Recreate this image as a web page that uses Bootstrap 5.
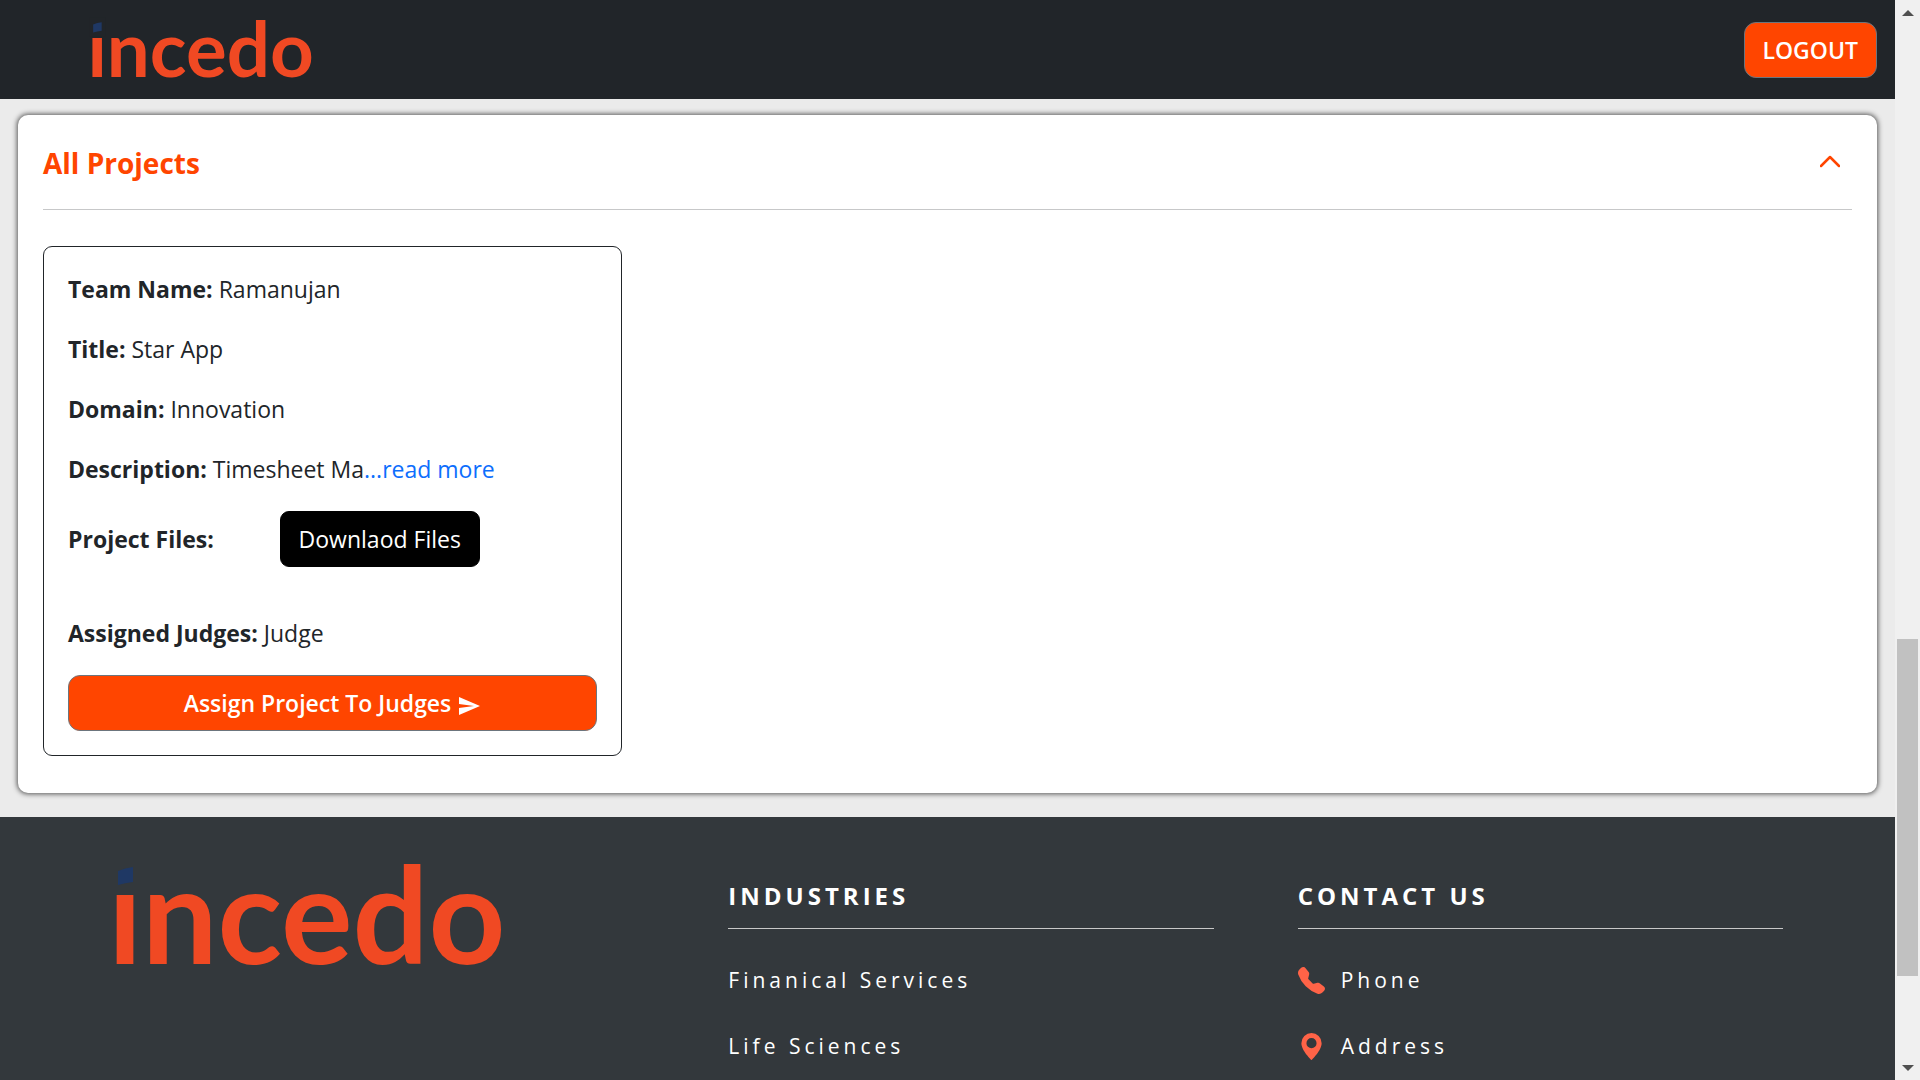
<!DOCTYPE html>
<html lang="en">
<head>
<meta charset="utf-8">
<meta name="viewport" content="width=device-width, initial-scale=1">
<title>Incedo - All Projects</title>
<link href="https://cdn.jsdelivr.net/npm/bootstrap@5.3.0/dist/css/bootstrap.min.css" rel="stylesheet">
<style>
  body { font-family: "Open Sans", "Noto Sans", sans-serif; font-size: 23px; line-height: 36px; background: #ebebeb; }
  .page-body { min-width: 0; }
  .top-bar { background: #212529; padding: 21px 18px 21px 92px; }
  .brand-mark { display: block; overflow: visible; fill: #f04923; font-family: Lato, sans-serif; font-weight: 700; font-size: 134px; }
  .brand-mark .tittle { fill: #1f3864; }
  .brand-top { width: 222px; height: 57px; }
  .brand-top .backdrop { fill: #212529; }
  .brand-foot { width: 390px; height: 100px; margin-left: -43px; }
  .brand-foot .backdrop { fill: #33383c; }
  .btn-big { --bs-btn-font-size: 23px; --bs-btn-line-height: 36px; --bs-btn-padding-y: 9px; --bs-btn-padding-x: 18px; }
  .btn-flame { --bs-btn-bg: #ff4500; --bs-btn-color: #fff; --bs-btn-border-color: #6c757d; --bs-btn-hover-bg: #e03d00; --bs-btn-hover-color: #fff; --bs-btn-border-radius: 12px; --bs-btn-font-weight: 600; }
  .btn-ink { --bs-btn-bg: #000; --bs-btn-color: #fff; --bs-btn-border-color: #000; --bs-btn-hover-bg: #222; --bs-btn-hover-color: #fff; --bs-btn-border-radius: 9px; }
  .panel { margin: 16px 18px 24px; padding: 24px 25px 37px; border-radius: 10px; box-shadow: 0 0 5px 1px #555; }
  .panel-head { height: 71px; margin-bottom: 36px; padding-right: 12px; border-bottom: 1px solid #c7c8c9; }
  .panel-title { font-size: 28px; line-height: 48px; color: #ff4500; }
  .fold { color: #ff4500; line-height: 0; }
  .project { border: 1px solid #212529; border-radius: 9px; }
  .project .card-body { padding: 24px; }
  .project p { margin-bottom: 24px; }
  .files-row { margin-bottom: 48px; }
  .files-label { flex: 0 0 40%; }
  .foot { background: #33383c; color: #fff; padding: 48px 112px 0 159px; }
  .foot .row { --bs-gutter-x: 84px; }
  .foot h2 { font-size: 24px; line-height: 30px; letter-spacing: 4px; padding: 16px 0 17px; border-bottom: 1px solid #c8c8c8; margin-bottom: 33px; }
  .foot li { margin-bottom: 30px; font-size: 21px; letter-spacing: 4px; }
  .foot a { color: #fff; text-decoration: none; }
  .foot svg.glyph { fill: #ff6347; width: 27px; height: 27px; }
  .scroller { flex: 0 0 25px; background: #f0f0f0; padding: 10px 0 9px; }
  .scroller .thumb { width: 21px; height: 337px; margin-top: 623px; background: #c1c1c1; }
</style>
</head>
<body class="d-flex vh-100 overflow-hidden">
<div class="page-body flex-grow-1 vh-100 overflow-hidden">
  <nav class="top-bar d-flex align-items-center justify-content-between">
    <a href="#" aria-label="incedo">
      <svg class="brand-mark brand-top" viewBox="0 0 390 100">
        <text x="-8" y="99">incedo</text>
        <rect class="backdrop" x="-5" y="-6" width="29" height="33"/>
        <path class="tittle" d="M2 6Q9 3 17 2V17Q9 18 2 20Z"/>
      </svg>
    </a>
    <button type="button" class="btn btn-big btn-flame">LOGOUT</button>
  </nav>

  <main>
    <section class="panel bg-white">
      <div class="panel-head d-flex align-items-start justify-content-between">
        <h1 class="panel-title fw-bold mb-0">All Projects</h1>
        <button type="button" class="fold btn border-0 p-0 mt-2" aria-label="Collapse">
          <svg width="20" height="28" viewBox="0 0 20 28" fill="none" stroke="currentColor" stroke-width="2.5" stroke-linecap="round" stroke-linejoin="round"><path d="M1 19L10 10L19 19"/></svg>
        </button>
      </div>
      <div class="row g-0">
        <div class="col-4 pe-4">
          <article class="card project">
            <div class="card-body">
              <p><b>Team Name:</b> Ramanujan</p>
              <p><b>Title:</b> Star App</p>
              <p><b>Domain:</b> Innovation</p>
              <p><b>Description:</b> Timesheet Ma<a href="#" class="text-decoration-none">...read more</a></p>
              <div class="files-row d-flex align-items-center">
                <b class="files-label">Project Files:</b>
                <button type="button" class="btn btn-big btn-ink">Downlaod Files</button>
              </div>
              <p><b>Assigned Judges:</b> Judge</p>
              <button type="button" class="btn btn-big btn-flame w-100">Assign Project To Judges
                <svg width="24" height="24" viewBox="0 0 24 24" fill="currentColor"><path d="M2 21L23 12L2 3V10L17 12L2 14Z"/></svg>
              </button>
            </div>
          </article>
        </div>
      </div>
    </section>
  </main>

  <footer class="foot">
    <div class="row">
      <div class="col-4">
        <svg class="brand-mark brand-foot" viewBox="0 0 390 100" role="img" aria-label="incedo">
          <text x="-8" y="99">incedo</text>
          <rect class="backdrop" x="-5" y="-6" width="29" height="33"/>
          <path class="tittle" d="M2 6Q9 3 17 2V17Q9 18 2 20Z"/>
        </svg>
      </div>
      <div class="col-4">
        <h2 class="fw-bold">INDUSTRIES</h2>
        <ul class="list-unstyled">
          <li><a href="#">Finanical Services</a></li>
          <li><a href="#">Life Sciences</a></li>
        </ul>
      </div>
      <div class="col-4">
        <h2 class="fw-bold">CONTACT US</h2>
        <ul class="list-unstyled">
          <li><a href="#" class="d-flex align-items-center gap-3">
            <svg class="glyph" viewBox="0 0 16 16"><path d="M1.885.511a1.745 1.745 0 0 1 2.61.163L6.29 2.98c.329.423.445.974.315 1.494l-.547 2.19a.678.678 0 0 0 .178.643l2.457 2.457a.678.678 0 0 0 .644.178l2.189-.547a1.745 1.745 0 0 1 1.494.315l2.306 1.794c.829.645.905 1.87.163 2.611l-1.034 1.034c-.74.74-1.846 1.065-2.877.702a18.634 18.634 0 0 1-7.01-4.42 18.634 18.634 0 0 1-4.42-7.009c-.362-1.03-.037-2.137.703-2.877L1.885.511z"/></svg>Phone</a></li>
          <li><a href="#" class="d-flex align-items-center gap-3">
            <svg class="glyph" viewBox="0 0 16 16"><path d="M8 16s6-5.686 6-10A6 6 0 0 0 2 6c0 4.314 6 10 6 10zm0-7a3 3 0 1 1 0-6 3 3 0 0 1 0 6z"/></svg>Address</a></li>
        </ul>
      </div>
    </div>
  </footer>
</div>

<div class="scroller d-flex flex-column align-items-center" aria-hidden="true">
  <svg width="12" height="6" viewBox="0 0 12 6" fill="#505050"><path d="M0 6L6 0L12 6Z"/></svg>
  <div class="thumb"></div>
  <svg class="mt-auto" width="12" height="6" viewBox="0 0 12 6" fill="#505050"><path d="M0 0L6 6L12 0Z"/></svg>
</div>
<script src="https://cdn.jsdelivr.net/npm/bootstrap@5.3.0/dist/js/bootstrap.bundle.min.js"></script>
</body>
</html>
